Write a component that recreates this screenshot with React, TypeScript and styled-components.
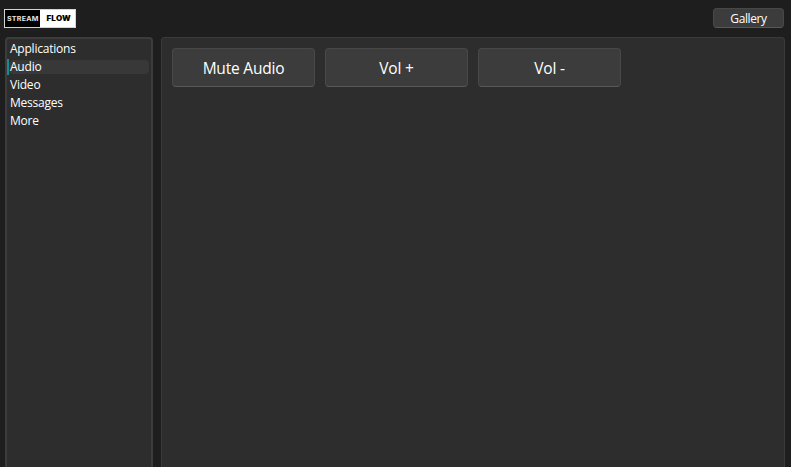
import React, { useState } from 'react';
import styled, { createGlobalStyle } from 'styled-components';

const GlobalStyle = createGlobalStyle`
  * { box-sizing: border-box; }
  body { margin: 0; background: #1e1e1e; overflow: hidden; }
`;

const Window = styled.div`
  display: flex;
  flex-direction: column;
  width: 100%;
  height: 100vh;
  background: #1e1e1e;
  color: #fff;
  font-family: 'Open Sans', 'Noto Sans', sans-serif;
`;

const Header = styled.header`
  display: flex;
  flex: none;
  justify-content: space-between;
  align-items: flex-start;
  height: 37px;
  padding: 8px 7px 0 4px;
`;

const Logo = styled.div`
  display: flex;
  width: 72px;
  height: 19px;
  margin-top: 1px;
  border: 1px solid #d4d4d4;
  background: #fff;
  font-family: Inter, sans-serif;
  line-height: 17px;
`;

const LogoHalf = styled.span<{ $dark?: boolean }>`
  display: flex;
  justify-content: center;
  width: 35px;
  height: 17px;
  color: ${({ $dark }) => ($dark ? '#e4e4e4' : '#000')};
  background: ${({ $dark }) => ($dark ? '#000' : '#fff')};
  font-size: ${({ $dark }) => ($dark ? 6.2 : 7)}px;
  font-weight: ${({ $dark }) => ($dark ? 700 : 900)};
  padding-left: ${({ $dark }) => ($dark ? 1 : 3)}px;
`;

const LogoText = styled.span`
  letter-spacing: 0.2px;
  transform: scaleX(1.15);
`;

const Button = styled.button<{ $large?: boolean }>`
  display: flex;
  align-items: center;
  justify-content: center;
  flex: none;
  width: ${({ $large }) => ($large ? 143 : 71)}px;
  height: ${({ $large }) => ($large ? 39 : 20)}px;
  padding: 1px 0 0;
  border: 1px solid #484848;
  border-bottom-color: #585858;
  border-radius: 4px;
  background: #3c3c3c;
  color: #fff;
  font-family: inherit;
  font-size: ${({ $large }) => ($large ? 15.5 : 12)}px;
  letter-spacing: ${({ $large }) => ($large ? '-0.2px' : '-0.4px')};
`;

const Content = styled.div`
  display: flex;
  flex: 1;
  gap: 8px;
  min-height: 0;
  padding: 0 6px 0 5px;
`;

const Sidebar = styled.nav`
  flex: none;
  width: 148px;
  padding: 1px 2px 0 0;
  border: 2px solid #3c3c3c;
  border-bottom: 0;
  border-radius: 4px 4px 0 0;
  background: #2d2d2d;
`;

const Item = styled.div<{ $selected: boolean }>`
  display: flex;
  align-items: center;
  height: 18px;
  font-size: 12px;
  letter-spacing: -0.22px;
  cursor: default;

  &::before {
    content: '';
    flex: none;
    width: 2px;
    height: 16px;
    background: ${({ $selected }) => ($selected ? '#168b92' : 'transparent')};
  }
`;

const ItemLabel = styled.span<{ $selected: boolean }>`
  flex: 1;
  height: 14px;
  padding-left: 1px;
  border-radius: 4px;
  background: ${({ $selected }) => ($selected ? '#383838' : 'transparent')};
  line-height: 14px;
`;

const Panel = styled.main`
  display: flex;
  flex: 1;
  align-items: flex-start;
  gap: 10px;
  padding: 10px;
  border: 1px solid #3a3a3a;
  border-bottom: 0;
  border-radius: 4px 4px 0 0;
  background: #2d2d2d;
`;

const categories = ['Applications', 'Audio', 'Video', 'Messages', 'More'];
const actions = ['Mute Audio', 'Vol +', 'Vol -'];

export default function App() {
  const [selected, setSelected] = useState('Audio');
  return (
    <Window>
      <GlobalStyle />
      <Header>
        <Logo>
          <LogoHalf $dark><LogoText>STREAM</LogoText></LogoHalf>
          <LogoHalf><LogoText>FLOW</LogoText></LogoHalf>
        </Logo>
        <Button>Gallery</Button>
      </Header>
      <Content>
        <Sidebar>
          {categories.map((name) => (
            <Item key={name} $selected={name === selected} onClick={() => setSelected(name)}>
              <ItemLabel $selected={name === selected}>{name}</ItemLabel>
            </Item>
          ))}
        </Sidebar>
        <Panel>
          {actions.map((name) => (
            <Button key={name} $large>{name}</Button>
          ))}
        </Panel>
      </Content>
    </Window>
  );
}
